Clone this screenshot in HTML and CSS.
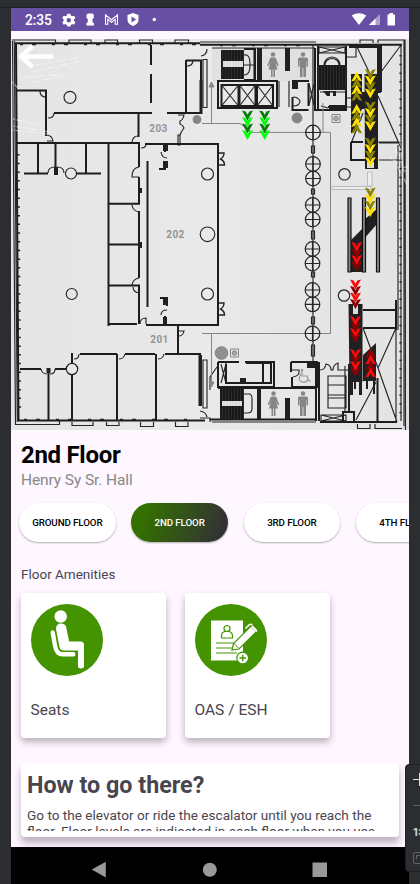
FILE: index.html
```html
<!DOCTYPE html>
<html lang="en">
<head>
<meta charset="utf-8">
<title>2nd Floor</title>
<link rel="stylesheet" href="styles.css">
</head>
<body>
<div class="desk">
<main class="phone">
<header class="status">
  <span class="time">2:35</span>
  <svg class="status-left" viewBox="60 8 100 23" width="100" height="23" fill="#fff">
    <path d="M67.300 13.700h3l.5 1.800 1.500.8 1.800-.6 1.300 2.400-1.400 1.300v1.600l1.400 1.300-1.400 2.400-1.700-.6-1.500.9-.5 1.600h-3l-.5-1.600-1.500-.9-1.700.6-1.300-2.400 1.300-1.300v-1.600l-1.300-1.300 1.300-2.400 1.800.6 1.400-.8zM68.800 18a2.200 2.200 0 1 0 0 4.400 2.200 2.200 0 0 0 0-4.400z" fill-rule="evenodd"/>
    <path d="M88 13.500h4.500l1.300 1.300v3l-1.500 1.700.6 3.500h1v2.500h-7.500v-2.500h1l.6-3.500-1.500-1.700v-3z"/>
    <path d="M105.500 24.300v-9.300l6 4.800 6-4.800v9.300h-2.300v-5l-3.700 3-3.700-3v5z" fill="none" stroke="#fff" stroke-width="1.100"/>
    <path fill-rule="evenodd" d="M133 13l5.500 2v5c0 3-2.500 5-5.500 6-3-1-5.500-3-5.500-6v-5zM131.500 16.400v6l4.600-3z"/>
    <circle cx="154.300" cy="19.500" r="1.700"/>
  </svg>
  <svg class="status-right" viewBox="350 8 50 23" width="50" height="23" fill="#fff">
    <path d="M351.700 15.500q7.300-4.700 14.600 0l-7.300 9.500z"/>
    <path d="M380 14v11h-11z" opacity=".45"/><path d="M375.500 18.500v6.500h-6.500z"/>
    <path d="M389.500 13h3.500v1.500h2v11h-7.500v-11h2z"/>
  </svg>
</header>
<section class="map">
<svg viewBox="11 39 398 391" width="398" height="391">
  <defs>
    <linearGradient id="paper" x2="1"><stop stop-color="#e5e5e5"/><stop offset=".5" stop-color="#e9e9e9"/><stop offset="1" stop-color="#e3e3e3"/></linearGradient>
    <path id="v" d="M-5.500-5l3.700 1L0-.7 1.800-4l3.700-1L0 5z"/>
    <g id="gate"><circle r="7.300"/><path d="M-7.300 0h14.600M0-7.300V7.300"/></g>
    <g id="woman" fill="#858585"><circle cy="-10.500" r="2.200"/><path d="M-2.500-7.500h5l3.300 8-1.500.6-2-4.600 2.200 8H2V12H.4V4.500H-.4V12H-2V4.500h-2.500l2.200-8-2 4.600-1.500-.6z"/></g>
    <g id="man" fill="#858585"><circle cy="-10.500" r="2.200"/><path d="M-3.500-7.500h7q1.500 0 1.500 1.500v7.500H3.400V-4H3V12H.4V3H-.4v9H-3V-4h-.4v5.500H-5V-6q0-1.500 1.500-1.500z"/></g>
    <pattern id="treads" width="3" height="4" patternUnits="userSpaceOnUse"><path fill="#191919" d="M0 0h3v4H0z"/><path d="M0 0v4" stroke="#454545" stroke-width=".8"/></pattern>
    <g id="down"><use href="#v" y="-9.500" class="a"/><use href="#v" y="-3" class="b"/><use href="#v" y="3.500" class="a"/><use href="#v" y="10" class="b"/></g>
  </defs>
  <path fill="url(#paper)" d="M11 39h398v391H11z"/>
  <g fill="#dadada"><path d="M403 39h6v391h-6zM212 48h104v33H212z" opacity=".5"/></g>
  <g class="thin">
    <path d="M12.500 41L15.500 424.500H59.500V421M14.300 41L17.300 422M12 40h43.500v2.500M69 43v-3h22v3.500M105 43.500v-3.500h12.500v3.500M139.500 44v-4h13v4M175 44v-4h13.500v4M360 43v-3h13v3M378 43v-3h27l.5 390M404 40v386"/>
    <path d="M72 422v3.500h21V422M106.500 422v3.500h12.500V422M140.500 422v4.500h13V422M175.500 422v4.500h12.500V422M357.500 424v4.500h12.500V424M375 424v4.500h27"/>
    <path d="M200 42h116M203 59.500h4v48h-4zM178 135h2v10h-2zM203 360h4v48h-4zM200 418h10v4"/>
    <circle cx="70" cy="97.300" r="6"/><circle cx="71" cy="173.500" r="5.500" fill="#e8e8e8"/><circle cx="71.700" cy="294" r="5.500"/>
    <circle cx="207.500" cy="174" r="6"/><circle cx="207.500" cy="234.300" r="7.300"/><circle cx="207.500" cy="294" r="6"/>
    <circle cx="344.500" cy="174.300" r="5.700"/><circle cx="344" cy="295.500" r="5.700"/>
    <path d="M40 91q0 6 6 6M48 118q6 0 6-5M46 135q6 0 7 6h-6M138 136q-5 0-6 6M141 148q5 0 5-4M187 66q6 0 6-6M201 56q6-1 6-7M178 115h6q-1 5-4 6v3q3 1 4 4-3 4-4 7M139 167q-7 1-7 10h7M132 205q1 6 7 7M139 278q-6 1-7 7M133 287q0 5 6 6M48 173q0-6 7-6M57 167q7 0 7 6M140 324q0-6 6-6v6M74 359q5 0 5-5M119 359q5 0 6-5M158 359q5 0 6-5M41 369q1 5 6 5M50 374q5 0 5-5M200 411q6 1 7 6M179 331h5q-1 5-5 5M161 152q1 6 6 6M161 315q0-5 6-5"/>
    <path d="M217.500 153h6.500q0 4-3.500 6 4 2 4 6h-7M217.500 303h6.500q0 4-3.500 6 4 2 4 6h-7" stroke-width="1.400"/>
    <path d="M212 48h103M212 422h104M244 49h10v30M244 55q6-1 6 8v3q0 9-6 9M244 65h10M279 81v26M289 81v26M293 106q7 0 7-5-2-4-7-4"/>
    <path d="M221.500 85l17 21m0-21l-17 21M239.500 85l16 21m0-21l-16 21M257 85l16 21m0-21l-16 21M309 84l5 21m0-21l-5 21M319 47l26 6m0-6l-26 6"/>
    <path d="M319 47h26v6h-26zM325 65a7 6.500 0 0 1 14 0M324 65a8 8 0 0 1 16 0M346 57h10V45M346 90v8h6M346 98v9h6M320 92h25M321 106l7 2"/>
    <path d="M357 47l15 31M401 45l-23 31M378 96l23 52M378 142h22M352 141l11-28M379 143h20M379 160h20M401 45v376M398 145v185"/>
    <path d="M313 45v320M311.500 146h3v7h-3zM311.500 189h3v5h-3zM311.500 231h3v8h-3zM311.500 272h3v5h-3zM311.500 317h3v7h-3zM311.500 345h3v11h-3z"/>
    <path d="M363 328l15 40 19 54M396 328l-18 40M376 382l-20 38M396 330v93M328 376h18v32h-18zM328 385h18M328 395h18M328 398h18M321 415h25v6h-25zM321 415l25 6m0-6l-25 6M345 366v46"/>
    <path d="M226 363v20M221 364l5 19m0-19l-5 19M217 367l-7 10v13M244 394h5q3 0 3 5v10q0 4-5 4h-3M293 377q7-1 6-7h-7M320 370q5 0 6-6 5 1 5 6h2q0-5 5-7v7h10"/>
  </g>
  <g class="wall">
    <path d="M16 42.500L18.500 421M15 43.200h185M200 44.800h202M16 90.500h31M46 91v23M46 114v22M54 113h98M167 113h34M151 45v20M151 74v29M138.500 114v23M186 60v53M186 60.500h16M201 60v53M17 143h123M145 144h73v181h-72"/>
    <path d="M38 144v29M55.500 144v29M86 144v29M24 173.500h24M76 173.500h25M108.500 144v182M139 142v25M139 177v26M139 211v67M139 286v38M109 203.800h31M109 244.500h31M109 285.500h31M109 324h28M147.500 161v146"/>
    <path d="M165 144v8M165 161v8h-6M160 298h7v8M165 316v9M178 325v29M20 369h21M55 369h12M48.500 369v51M72 353v67M80 354h37M125 354h30M165 354h36M117 354v67M156 354v67M18 420.500h187"/>
    <path d="M244 49h11v31h-11M218 81h59v27h-59zM221.500 85h17v21h-17zM239.500 85h16v21h-16zM257 85h16v21h-16zM293 81h16M308.500 83v23M292.500 97v13h16M315 48v62h3V46M346 46v64h-28M380 46v46h-3M328 107h17M396 310h-33M363 328h33M396 300v30M351 142h12M351 142v18h14"/>
    <path d="M218 362h21M245 362h29v25h-56v-25M226 364v19h19M246 363h17v20h-17M263 363h8v20h-8M291 362h26v25h-25v-10M291 362v10M316 362v59M319 362v59M210 419.500h106M218 388h98M349 364v47M320 422h77M377.500 378v44M343 412h11v10h-11z"/>
  </g>
  <circle cx="72" cy="369" r="5.700" fill="#e8e8e8" stroke="#222" stroke-width="1.200"/>
  <g class="gray">
    <path d="M202 123.500h38l12 8.900h78.500V333.500H202M211.500 123V82M211.500 333v53M323 132v-29"/>
    <path d="M332 186.500h39v3h-39zM367.500 172h4.500v14h-4.500z" class="pale"/>
    <path d="M209 87l2.500-5 2.500 5zM209 382l2.500 5 2.500-5z" fill="#888"/>
    <circle cx="197" cy="119.500" r="4" fill="#858585"/><circle cx="297" cy="118" r="5" fill="#858585"/><circle cx="221.500" cy="353" r="6.300" fill="#909090"/>
    <path d="M332 114.500h8v8h-8zM230.500 349h8v8h-8z"/><circle cx="336" cy="118.500" r="2.300" fill="#aaa"/><circle cx="234.500" cy="353" r="2.300" fill="#aaa"/>
  </g>
  <g class="dark">
    <path d="M221 50h23v29h-23zM220 388h24v31h-24zM318 65h28v25h-28z" fill="url(#treads)"/>
    <path d="M257 48h5v32h-5zM257 388h4v31h-4zM285 48h5v23h-5zM285 398h5v21h-5zM292 80h6v9h-6zM199.500 80h3v34h-3zM198.500 355h3.500v51h-3.500zM54 167h4v8h-4zM46.500 368h4v5h-4zM240 378h6v6h-6zM307 363h8v5h-8z"/>
    <path d="M163 145h5v6h-5zM163 161h5v7h-5zM163 299h4v6h-4zM163 317h4v7h-4zM139 188h3v5h-3zM139 242h3v6h-3zM377 45h5v47h-5z"/>
    <path d="M351 74h11v35l-9 24h-2zM364.500 74H378v95h-13zM352 92h26v17h-26zM349 45h32v3h-32zM323 91l4 5h3v-4h3v4h3v-5zM329 105h17v4h-17z"/>
    <path d="M377 209v15l-14 16v32h-12v-32l12-12 2-9z"/>
    <path d="M348.500 304h14v78h-13zM363 355l13-12v38h-13zM350 377h3v18h-3zM354 377h2v12h-2zM359 377h3v18h-3zM366 377h2v12h-2zM373 377h2v17h-2z"/>
  </g>
  <path d="M223 61h20v6h-20zM222 401h20v5h-20zM353 302h5v12h-5zM367 162h7v6h-7z" fill="#ddd"/>
  <g class="rails"><path d="M348 198h3v74h-3zM362.500 198h3v74h-3zM376.500 198h3v74h-3z"/></g>
  <g class="ticks"><path d="M18.500 154l1.500 256M400.500 55V420"/><path d="M24 419.500H195M20 44.500H200M220 45.500H310" class="wide"/></g>
  <g fill="none" stroke="#252525" stroke-width="1.200"><use href="#gate" x="313" y="132.500"/><use href="#gate" x="313" y="164"/><use href="#gate" x="313" y="178.500"/><use href="#gate" x="312.700" y="205"/><use href="#gate" x="312.700" y="219.500"/><use href="#gate" x="312.500" y="249"/><use href="#gate" x="312.500" y="263.500"/><use href="#gate" x="312.500" y="290"/><use href="#gate" x="312.500" y="304.300"/><use href="#gate" x="312.500" y="333.500"/></g>
  <use href="#woman" x="273" y="65"/><use href="#man" x="303" y="65"/><use href="#woman" x="273.500" y="404"/><use href="#man" x="303" y="404"/>
  <g fill="none" stroke="#999" stroke-width="1.200"><path d="M302 371v5h5l2 5h2M301 374q-4 6 1 8 5 1 6-3"/><circle cx="302" cy="370" r=".7"/></g>
  <g class="room"><text x="158.500" y="132">203</text><text x="175.500" y="238">202</text><text x="159.500" y="342.500">201</text></g>
  <g class="scuffs"><path d="M30 66l48-8M31 72l50-11M20 78l45-4M28 83l37-7M12 82l7 7M13 119l30 7M13 126l43 7M12 130l35 4M394 145l12 28M390 158l17 10M399 135l5 40M396 163l11 22"/></g>
  <path d="M51.500 56.500H22M31 47.500l-10 9 10 9" fill="none" stroke="#fff" stroke-width="4.600" stroke-linecap="round" stroke-linejoin="round"/>
  <g class="green"><use href="#down" x="247.500" y="125"/><use href="#down" x="264.700" y="125"/></g>
  <g class="yellow"><use href="#down" transform="translate(356.700 86.500) scale(1 -1)"/><use href="#down" transform="translate(356.700 119) scale(1 -1)"/><use href="#down" x="370.300" y="83.500"/><use href="#down" x="370.300" y="116"/><use href="#down" x="370.300" y="152"/><use href="#down" x="370.300" y="202"/></g>
  <g class="red"><use href="#down" x="356.700" y="256.500"/><use href="#down" x="355.500" y="294"/></g>
  <g class="red"><use href="#v" x="355.500" y="321"/><use href="#v" x="355.500" y="333"/><use href="#v" x="355.500" y="354"/><use href="#v" x="355.500" y="366"/></g>
  <g class="maroon"><use href="#v" x="355.500" y="327"/><use href="#v" x="355.500" y="338"/><use href="#v" x="355.500" y="360"/><use href="#v" x="355.500" y="372"/></g>
  <g class="red"><use href="#down" transform="translate(370.700 363) scale(1 -1)"/></g>
</svg>
</section>
<section class="intro"><h1>2nd Floor</h1><p>Henry Sy Sr. Hall</p></section>
<nav class="floors"><button>GROUND FLOOR</button><button class="on">2ND FLOOR</button><button>3RD FLOOR</button><button>4TH FLOOR</button></nav>
<h2 class="label">Floor Amenities</h2>
<section class="cards">
  <article class="card">
    <svg viewBox="31 603.500 72 72" width="72" height="72"><circle cx="67" cy="639.500" r="36" fill="#439400"/><g fill="#fff"><circle cx="60.700" cy="616" r="6.200"/><path d="M56 628.500q0-5.500 5-5.500 4.500 0 5.300 4l2.800 14h11.500q3.400 0 3.400 3.500v21q0 2.500-3 2.500t-3-2.500V650H64q-4 0-4.700-4z"/></g><path d="M52.700 632l2.300 13q1.300 8.800 7.500 8.800h10.800" fill="none" stroke="#439400" stroke-width="6.200" stroke-linecap="round"/><path d="M52.700 632l2.300 13q1.300 8.800 7.500 8.800h10.800" fill="none" stroke="#fff" stroke-width="4.400" stroke-linecap="round"/></svg>
    <h3>Seats</h3>
  </article>
  <article class="card">
    <svg viewBox="195 603.500 72 72" width="72" height="72"><circle cx="231" cy="639.500" r="36" fill="#439400"/><path fill="#fff" d="M211 620h32v40h-32z"/><g fill="none" stroke="#439400" stroke-width="1.200"><circle cx="227" cy="628" r="3"/><path d="M221.500 637.500v-2q0-4 3.500-4.500h4q3.500 1 3.500 4.500v2zM216 642.500h19M216 647.500h17M216 652.500h21"/></g><path d="M232 649.500l1.500-6.500 19-19 5.500 5.500-19 19z" fill="#fff" stroke="#439400" stroke-width="1.200"/><path d="M234 643l5 5M251 626l5 5" stroke="#439400"/><path d="M245.500 628l4-4h3M252 626l5 5" fill="none" stroke="#fff" stroke-width="1.600"/><circle cx="242.700" cy="657.500" r="6.500" fill="#439400"/><circle cx="242.700" cy="657.500" r="5.300" fill="#fff"/><path d="M239.500 657.500h6.400M242.700 654.300v6.400" stroke="#439400" stroke-width="1.300"/></svg>
    <h3>OAS / ESH</h3>
  </article>
</section>
<section class="guide"><h2>How to go there?</h2><p>Go to the elevator or ride the escalator until you reach the<br>floor. Floor levels are indicated in each floor when you use</p></section>
<footer class="nav"><svg viewBox="11 847 398 37" width="398" height="37" fill="#999"><path d="M91.800 869.500l14-7.700v15.700zM312.500 862.500h14.500v14.500h-14.500z"/><circle cx="209.800" cy="869.700" r="7"/></svg></footer>
</main>
<aside class="tools"><svg viewBox="405 764 15 107" width="15" height="107" fill="none"><path d="M412 778.500h9M418.500 772v13" stroke="#ddd"/><path d="M412 804.500h9" stroke="#606266"/><path d="M421 851.500h-7q-1.500 0-1.500 1.500v8q0 1.500 1.500 1.500h7M415.500 858v-3.500h4" stroke="#626468"/></svg><span>1:1</span></aside>
</div>
</body>
</html>
```
FILE: styles.css
```css
* { box-sizing: border-box; }
body { margin: 0; font-family: Roboto, sans-serif; }
h1, h2, h3, p { margin: 0; }
svg { display: block; }
.desk { position: relative; width: 420px; height: 884px; padding: 8px 11px 0; background: #2b2d30; overflow: hidden; box-shadow: inset 0 7px #2b2d30, inset 0 8px #1e1f22; }
.phone { width: 398px; height: 876px; background: #fef7ff; display: flex; flex-direction: column; overflow: hidden; }
.status { flex: none; height: 23px; background: #6750a4; display: flex; align-items: center; color: #fff; padding-left: 14px; }
.time { width: 35px; font-size: 13.8px; font-weight: 500; line-height: 23px; padding-top: 1px; letter-spacing: -.1px; }
.status-right { margin-left: auto; margin-right: 9px; }
.map { flex: none; margin-top: 8px; height: 391px; }
.thin { fill: none; stroke: #252525; stroke-width: 1.15; }
.wall { fill: none; stroke: #1d1d1d; stroke-width: 2; }
.gray { fill: none; stroke: #858585; stroke-width: 1; }
.pale { stroke: #bbb; fill: #eee; }
.dark { fill: #202020; }
.rails { fill: #888; stroke: #111; stroke-width: 1.2; }
.ticks { fill: none; stroke: #222; stroke-width: 2.2; stroke-dasharray: 1.500 7.200; }
.wide { stroke-width: 1.5; stroke-dasharray: 3 9 4 16; }
.scuffs { fill: none; stroke: #fff; stroke-width: 1.2; opacity: .5; stroke-dasharray: 2 1.500 6 1 1 2; }
.room { font-size: 10px; font-weight: 700; fill: #949494; text-anchor: middle; letter-spacing: .5px; }
.a { fill: var(--a); }
.b { fill: var(--b); }
.green { --a: #087a08; --b: #00ff08; }
.yellow { --a: #8b8500; --b: #ffe100; }
.red { --a: #ff0909; --b: #8c0005; fill: #ff0909; }
.maroon { fill: #8c0005; }
.intro { flex: none; height: 72px; padding: 11px 10px 0; }
.intro h1 { font-size: 24px; line-height: 28px; font-weight: 700; color: #000; letter-spacing: -.3px; }
.intro p { font-size: 15.500px; line-height: 19px; color: #888; margin-top: 2px; letter-spacing: -.1px; }
.floors { flex: none; height: 48px; display: flex; gap: 15.700px; padding: 1px 0 0 8px; overflow: hidden; }
.floors button { flex: none; width: 96.600px; height: 39px; border: 0; border-radius: 20px; padding: 0; font: 500 9.750px/39px Roboto, sans-serif; color: #000; background: #fff; letter-spacing: -.1px; box-shadow: 0 1px 2px rgba(0,0,0,.3); }
.floors .on { color: #fff; background: linear-gradient(110deg, #347000 15%, #333 90%); }
.label { flex: none; height: 43px; padding: 16px 10px 0; font-size: 13.500px; line-height: 17px; font-weight: 400; color: #49454f; }
.cards { flex: none; height: 170px; display: flex; gap: 19px; padding-left: 10px; }
.card { width: 145px; height: 145px; padding: 10.500px 10px 0; background: #fff; border-radius: 4px; box-shadow: 0 4px 7px rgba(55,35,60,.34); }
.card h3 { font-size: 15.500px; line-height: 19px; font-weight: 400; color: #49454f; margin: 25px 0 0 -.5px; }
.guide { flex: none; width: 378px; height: 74px; margin: 0 10px; padding: 8px 6px 0; background: #fff; border-radius: 4px; box-shadow: 0 6px 7px rgba(55,35,60,.32); }
.guide h2 { font-size: 23.300px; line-height: 28px; font-weight: 700; color: #49454f; }
.guide p { height: 24px; margin-top: 8px; overflow: hidden; font-size: 13.600px; line-height: 16px; color: #49454f; white-space: nowrap; }
.nav { position: relative; flex: none; height: 37px; margin-top: auto; background: #000; }
.tools { position: absolute; left: 405px; top: 764px; width: 25px; height: 108px; background: #2b2d30; border: 1px solid #1e1f22; border-radius: 4px; }
.tools span { position: absolute; left: 7px; top: 60px; font: 700 11px/14px Inter, sans-serif; color: #ccc; }
```
